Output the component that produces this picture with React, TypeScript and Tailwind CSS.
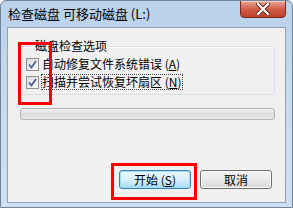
export default function App() {
  const cjk = { fontFamily: '"Noto Sans CJK SC", "Microsoft YaHei", sans-serif' };
  return (
    <div
      className="relative w-[293px] h-[208px] overflow-hidden bg-gradient-to-b from-[#b9d1ea] via-[#c8dbf0] to-[#cfe0f3] border border-[#6f8399] rounded-t-[6px]"
      style={cjk}
    >
      {/* Title bar */}
      <div className="flex h-[26px] items-start">
        <div className="pl-[7px] pt-[5px] text-[13px] leading-[16px] text-black">检查磁盘 可移动磁盘 (L:)</div>
        <div className="ml-auto mr-[6px] w-[46px] h-[18px] -mt-px rounded-b-[4px] border border-[#7a2a1e] bg-gradient-to-b from-[#e9a89a] via-[#d05e48] to-[#c0402a] flex items-center justify-center shadow-[inset_0_1px_0_rgba(255,255,255,0.5)]">
          <svg width="14" height="12" viewBox="0 0 14 12">
            <path d="M2 1 L12 11 M12 1 L2 11" stroke="#5a2018" strokeWidth="4" strokeLinecap="square" />
            <path d="M2 1 L12 11 M12 1 L2 11" stroke="#ffffff" strokeWidth="2.2" strokeLinecap="square" />
          </svg>
        </div>
      </div>

      {/* Client area */}
      <div className="mx-[6px] h-[176px] border border-[#8da2bd] bg-[#f0f0f0] text-[12px] leading-[14px] text-black">
        <fieldset className="mt-[11px] ml-[11px] mr-[10px] h-[56px] border border-[#d5dfe5] rounded-[3px] px-[6px] shadow-[inset_1px_1px_0_#ffffff]">
          <legend className="ml-[6px] px-[3px] text-[12px] leading-[14px]">磁盘检查选项</legend>
          <div className="flex flex-col gap-[4px] mt-[4px]">
            {[
              { label: '自动修复文件系统错误', key: 'A', focus: false },
              { label: '扫描并尝试恢复坏扇区', key: 'N', focus: true },
            ].map((o) => (
              <div key={o.key} className="flex items-center h-[14px]">
                <div className="w-[13px] h-[13px] border border-[#8f8f8f] bg-gradient-to-br from-[#dcdcdc] to-[#fbfbfb] flex items-center justify-center">
                  <svg width="9" height="9" viewBox="0 0 9 9">
                    <path d="M1 4.5 L3.5 7.5 L8 1" fill="none" stroke="#4a5f97" strokeWidth="1.8" />
                  </svg>
                </div>
                <span className={`ml-[3px] whitespace-nowrap ${o.focus ? 'outline outline-1 outline-dotted outline-[#444]' : ''}`}>
                  {o.label} (<span className="underline">{o.key}</span>)
                </span>
              </div>
            ))}
          </div>
        </fieldset>

        {/* Progress bar */}
        <div className="mt-[13px] ml-[12px] mr-[10px] h-[12px] rounded-[3px] border border-[#b2b2b2] bg-gradient-to-b from-[#f3f3f3] via-[#dcdcdc] to-[#e8e8e8]" />

        {/* Buttons */}
        <div className="flex justify-end gap-[9px] mt-[50px] mr-[13px]">
          <button className="w-[72px] h-[19px] rounded-[3px] border border-[#3c7fb1] bg-gradient-to-b from-[#eaf6fd] via-[#d9f0fc] to-[#a7d9f5] text-[12px] leading-[14px] shadow-[inset_0_0_0_1px_#9ce0fc]">
            开始 (<span className="underline">S</span>)
          </button>
          <button className="w-[72px] h-[19px] rounded-[3px] border border-[#707070] bg-gradient-to-b from-[#f2f2f2] via-[#ebebeb] to-[#d6d6d6] text-[12px] leading-[14px] shadow-[inset_0_0_0_1px_#fcfcfc]">
            取消
          </button>
        </div>
      </div>

      {/* Red annotation boxes */}
      <div className="absolute left-[17px] top-[41px] w-[34px] h-[63px] border-[3px] border-[#ff0000]" />
      <div className="absolute left-[110px] top-[162px] w-[86px] h-[37px] border-[3px] border-[#ff0000]" />
    </div>
  );
}
